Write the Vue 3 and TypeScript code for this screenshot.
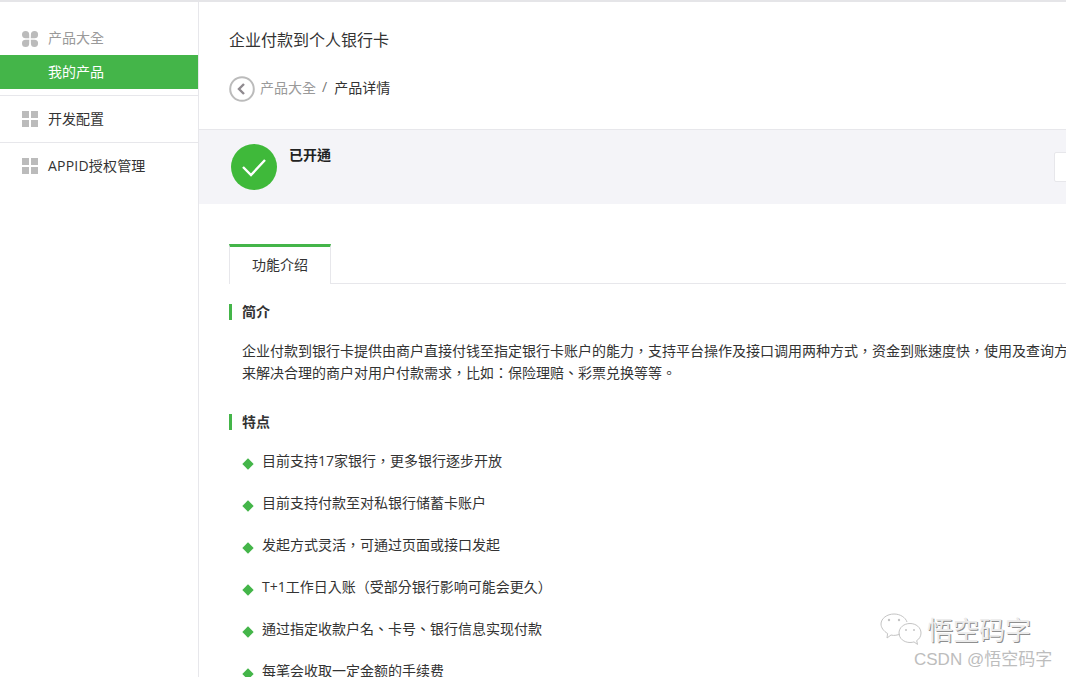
<script setup lang="ts">
const features: string[] = [
  '目前支持17家银行，更多银行逐步开放',
  '目前支持付款至对私银行储蓄卡账户',
  '发起方式灵活，可通过页面或接口发起',
  'T+1工作日入账（受部分银行影响可能会更久）',
  '通过指定收款户名、卡号、银行信息实现付款',
  '每笔会收取一定金额的手续费',
]
</script>

<template>
  <div class="page">
    <aside class="side">
      <div class="group first">
        <div class="row head">
          <svg class="ic" width="18" height="18" viewBox="0 0 18 18"><path fill="#bbb" d="M1 4.500a3.600 3.600 0 0 1 7.200 0c0 2 .1 3.700.1 3.700H4.600A3.600 3.600 0 0 1 1 4.500zM9.800 8.200s.1-1.700.1-3.700a3.600 3.600 0 1 1 3.600 3.700zM1 13.500a3.600 3.600 0 0 1 3.600-3.700h3.700s-.1 1.700-.1 3.700a3.600 3.600 0 0 1-7.200 0zM9.800 9.800h3.700a3.600 3.600 0 1 1-3.600 3.700c0-2-.1-3.700-.1-3.700z"/></svg>
          <span>产品大全</span>
        </div>
        <div class="row active"><span>我的产品</span></div>
      </div>
      <div class="group">
        <div class="row link">
          <svg class="ic" width="16" height="16" viewBox="0 0 16 16"><path fill="#bbb" d="M0 0h7v7H0zM9 0h7v7H9zM0 9h7v7H0zM9 9h7v7H9z"/></svg>
          <span>开发配置</span>
        </div>
      </div>
      <div class="group">
        <div class="row link">
          <svg class="ic" width="16" height="16" viewBox="0 0 16 16"><path fill="#bbb" d="M0 0h7v7H0zM9 0h7v7H9zM0 9h7v7H0zM9 9h7v7H9z"/></svg>
          <span class="appid">APPID授权管理</span>
        </div>
      </div>
    </aside>

    <main class="main">
      <header class="top">
        <h1>企业付款到个人银行卡</h1>
        <nav class="crumbs">
          <svg width="26" height="26" viewBox="0 0 26 26"><circle cx="13" cy="13" r="11.800" fill="none" stroke="#bbb" stroke-width="2"/><path d="M15 8l-5 5 5 5" fill="none" stroke="#8f8a8f" stroke-width="2.400"/></svg>
          <span class="muted">产品大全</span>
          <span class="slash">/</span>
          <span class="cur">产品详情</span>
        </nav>
      </header>

      <section class="status">
        <svg class="ok" width="46" height="46" viewBox="0 0 46 46"><circle cx="23" cy="23" r="23" fill="#3fb93a"/><path d="M12 23l8 8 14-15" fill="none" stroke="#fff" stroke-width="2.400"/></svg>
        <strong>已开通</strong>
        <div class="btn"></div>
      </section>

      <div class="tabs"><div class="tab">功能介绍</div></div>

      <h2 class="sec">简介</h2>
      <p class="intro">企业付款到银行卡提供由商户直接付钱至指定银行卡账户的能力，支持平台操作及接口调用两种方式，资金到账速度快，使用及查询方便。主要用<br>来解决合理的商户对用户付款需求，比如：保险理赔、彩票兑换等等。</p>

      <h2 class="sec second">特点</h2>
      <ul class="list">
        <li v-for="f in features" :key="f"><i></i><span>{{ f }}</span></li>
      </ul>
    </main>

    <div class="mark">
      <div class="mark-top">
        <svg width="42" height="36" viewBox="0 0 42 36"><g fill="none" stroke="#c4c4c4" stroke-width="1"><path d="M20 21c-2 1-6 2-9 1l-4 3 .6-4.500C3.500 18 1 14.500 1 11 1 5.500 7 1 14 1c6 0 11.500 3.300 13 8"/><path d="M41 20c0-5.500-5-9.500-11-9.500S19 14.500 19 20s5 9.500 11 9.500c1.500 0 3-.2 4-.6l3.500 2.500-.8-3.800C39.500 26 41 23 41 20z"/></g><g fill="#c4c4c4"><circle cx="9" cy="7" r="1.200"/><circle cx="19" cy="7" r="1.200"/><circle cx="26" cy="17" r="1"/><circle cx="34" cy="17" r="1"/></g></svg>
        <span class="mark-name">悟空码字</span>
      </div>
      <div class="mark-sub">CSDN @悟空码字</div>
    </div>
  </div>
</template>

<style>
html, body { margin: 0; overflow: hidden; background: #fff; }
</style>

<style scoped>
.page {
  position: relative;
  display: flex;
  width: 1066px;
  height: 677px;
  overflow: hidden;
  box-sizing: border-box;
  border-top: 2px solid #e5e5e8;
  font-family: "Open Sans", "Noto Sans CJK TC", sans-serif;
  font-size: 14px;
  color: #333;
}
.side {
  flex: none;
  width: 198px;
  border-right: 1px solid #e7e7eb;
}
.group { border-bottom: 1px solid #e7e7eb; padding: 6px 0; }
.group.first { padding: 19px 0 6px; }
.group:last-child { border-bottom: 0; }
.row {
  position: relative;
  display: flex;
  align-items: center;
  height: 34px;
  padding-left: 48px;
  line-height: 34px;
}
.ic { position: absolute; left: 21px; top: 9px; }
.row.link .ic { left: 22px; }
.head { color: #9a9a9a; }
.active { background: #44b549; color: #fff; }
.link { color: #333; }
.appid { letter-spacing: 0.2px; }
.main { flex: 1; min-width: 0; }
.top { padding: 0 0 0 30px; height: 128px; box-sizing: border-box; border-bottom: 1px solid #e7e7eb; }
h1 { margin: 0; padding-top: 26px; font-size: 16px; font-weight: 400; line-height: 24px; color: #333; }
.crumbs { display: flex; align-items: center; margin-top: 24px; height: 26px; font-size: 14px; }
.crumbs span { margin-bottom: 5px; }
.muted { margin-left: 5px; color: #9a9a9a; }
.crumbs .slash { margin: 0 7px 5px 6px; color: #777; }
.cur { color: #333; }
.status {
  position: relative;
  display: flex;
  align-items: flex-start;
  box-sizing: border-box;
  height: 74px;
  padding: 14px 0 0 32px;
  background: #f4f4f8;
}
.status strong { margin-left: 12px; font-size: 14px; line-height: 21px; font-weight: 700; color: #222; }
.btn { position: absolute; left: 855px; top: 22px; width: 60px; height: 28px; background: #fff; border: 1px solid #e7e7eb; border-radius: 2px; }
.tabs { margin-top: 40px; margin-left: 30px; height: 39px; border-bottom: 1px solid #e7e7eb; }
.tab {
  width: 100px;
  height: 37px;
  border-top: 3px solid #44b549;
  border-left: 1px solid #e7e7eb;
  border-right: 1px solid #e7e7eb;
  background: #fff;
  text-align: center;
  line-height: 36px;
  font-size: 14px;
  color: #333;
}
.sec {
  margin: 20px 0 0 30px;
  padding-left: 10px;
  border-left: 3px solid #44b549;
  height: 16px;
  line-height: 16px;
  font-size: 14px;
  font-weight: 700;
  color: #333;
}
.intro { margin: 20px 0 0 43px; white-space: nowrap; font-size: 14px; line-height: 22px; color: #333; }
.sec.second { margin-top: 30px; }
.list { margin: 0 0 0 43px; padding: 10px 0 0; list-style: none; }
.list li { display: flex; align-items: center; height: 42px; font-size: 14px; }
.list span { margin-bottom: 2px; }
.list i { flex: none; width: 8px; height: 8px; margin: 5px 10px 0 2px; background: #44b549; transform: rotate(45deg); }
.mark { position: absolute; left: 880px; top: 610px; pointer-events: none; }
.mark-top { display: flex; align-items: center; }
.mark-top svg { flex: none; }
.mark-name { margin-left: 5px; margin-bottom: 2px; font-size: 26px; line-height: 36px; color: #ececec; text-shadow: 1px 1px 0 #8e8e8e; }
.mark-sub { margin-left: 34px; margin-top: -1px; font-family: "Liberation Sans", "Noto Sans CJK SC", sans-serif; font-size: 17px; line-height: 22px; color: #bdbdbd; white-space: nowrap; }
</style>
